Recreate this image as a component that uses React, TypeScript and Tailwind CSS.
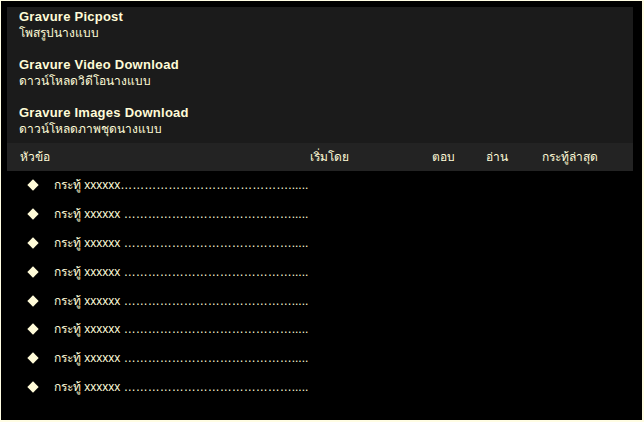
const links = [
  { title: "Gravure Picpost", sub: "โพสรูปนางแบบ" },
  { title: "Gravure Video Download", sub: "ดาวน์โหลดวิดีโอนางแบบ" },
  { title: "Gravure Images Download", sub: "ดาวน์โหลดภาพชุดนางแบบ" },
];

const rows = Array.from({ length: 8 }, (_, i) => i);
const dots = "…".repeat(14);

export default function App() {
  return (
    <div
      className="h-[422px] w-[644px] bg-[#fffde4] pt-[1px] pl-[1px] pr-[2px] pb-[2px]"
      style={{ fontFamily: "Tahoma, 'Liberation Sans', 'DejaVu Sans', sans-serif" }}
    >
      <div className="h-full w-full bg-black pt-[6px] pl-[6px] text-[#fffbd8]">
        <div className="w-[626px] bg-[#1b1b1b] pt-[2px] pb-[6px] pl-[12px] flex flex-col gap-[16px]">
          {links.map((l) => (
            <div key={l.title} className="flex flex-col">
              <div className="h-[16px] leading-[16px] text-[13px] font-bold tracking-[0.25px]">{l.title}</div>
              <div className="h-[16px] leading-[16px] text-[12px]">{l.sub}</div>
            </div>
          ))}
        </div>
        <div className="w-[626px] h-[28px] bg-[#232323] flex items-center pl-[13px] text-[12px]">
          <div className="w-[290px]">หัวข้อ</div>
          <div className="w-[122px]">เริ่มโดย</div>
          <div className="w-[54px]">ตอบ</div>
          <div className="w-[56px]">อ่าน</div>
          <div>กระทู้ล่าสุด</div>
        </div>
        <div className="flex flex-col">
          {rows.map((i) => (
            <div key={i} className="h-[28.8px] flex items-center text-[12px]">
              <div className="w-[47px] flex justify-center pl-[4px]">
                <div className="w-[8px] h-[8px] bg-[#fffbd8] rotate-45" />
              </div>
              <div className="whitespace-nowrap">
                กระทู้ xxxxxx{i === 0 ? dots + "......" : " " + dots + "....."}
              </div>
            </div>
          ))}
        </div>
      </div>
    </div>
  );
}
